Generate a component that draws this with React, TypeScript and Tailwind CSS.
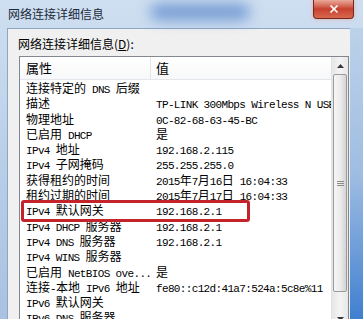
import { X } from "lucide-react";

type Row = { name: string; value: string };

const rows: Row[] = [
  { name: "连接特定的 DNS 后缀", value: "" },
  { name: "描述", value: "TP-LINK 300Mbps Wireless N USB Adapter" },
  { name: "物理地址", value: "0C-82-68-63-45-BC" },
  { name: "已启用 DHCP", value: "是" },
  { name: "IPv4 地址", value: "192.168.2.115" },
  { name: "IPv4 子网掩码", value: "255.255.255.0" },
  { name: "获得租约的时间", value: "2015年7月16日 16:04:33" },
  { name: "租约过期的时间", value: "2015年7月17日 16:04:33" },
  { name: "IPv4 默认网关", value: "192.168.2.1" },
  { name: "IPv4 DHCP 服务器", value: "192.168.2.1" },
  { name: "IPv4 DNS 服务器", value: "192.168.2.1" },
  { name: "IPv4 WINS 服务器", value: "" },
  { name: "已启用 NetBIOS ove...", value: "是" },
  { name: "连接-本地 IPv6 地址", value: "fe80::c12d:41a7:524a:5c8e%11" },
  { name: "IPv6 默认网关", value: "" },
  { name: "IPv6 DNS 服务器", value: "" },
];

// SimSun-like: half width latin, full width CJK
function Mixed({ text }: { text: string }) {
  const parts = text.match(/[\x00-\x7f]+|[^\x00-\x7f]+/g) ?? [];
  return (
    <>
      {parts.map((p, i) =>
        /^[\x00-\x7f]/.test(p) ? (
          <span
            key={i}
            className="inline-block leading-[15px] font-['Liberation_Mono',monospace] text-[11px] tracking-[-0.65px]"
          >
            {p}
          </span>
        ) : (
          <span
            key={i}
            className="inline-block leading-[15px] font-['Noto_Sans_CJK_SC',sans-serif] text-[12px]"
          >
            {p}
          </span>
        )
      )}
    </>
  );
}

function ScrollBar() {
  return (
    <div className="w-[17px] flex flex-col bg-gradient-to-r from-[#e6e6e6] via-[#f4f4f4] to-[#e6e6e6] border-l border-[#e3e3e3]">
      <div className="h-[17px] flex items-center justify-center">
        <svg width="7" height="4" viewBox="0 0 7 4">
          <path d="M0 4 L3.5 0 L7 4 Z" fill="#3a3a3a" />
        </svg>
      </div>
      <div className="flex-1 flex flex-col pb-[18px]">
        <div className="flex-1 mx-[1px] rounded-[2px] border border-[#9b9b9b] bg-gradient-to-r from-[#f6f6f6] via-[#ececec] to-[#d4d4d4] flex items-center justify-center">
          <div className="flex flex-col gap-[1px]">
            <span className="block w-[7px] h-[1px] bg-[#8c8c8c]" />
            <span className="block w-[7px] h-[1px] bg-[#8c8c8c]" />
            <span className="block w-[7px] h-[1px] bg-[#8c8c8c]" />
          </div>
        </div>
      </div>
      <div className="h-[17px] flex items-center justify-center">
        <svg width="7" height="4" viewBox="0 0 7 4">
          <path d="M0 0 L3.5 4 L7 0 Z" fill="#3a3a3a" />
        </svg>
      </div>
    </div>
  );
}

export default function App() {
  return (
    <div className="relative w-[363px] h-[319px] overflow-hidden flex flex-col bg-gradient-to-b from-[#cfdff1] via-[#b9cfe8] to-[#a9c2e0] text-black">
      {/* title bar */}
      <div className="relative h-[28px] flex items-start shrink-0">
        <div className="absolute left-[150px] top-[4px] w-[100px] h-[16px] rounded-full bg-[#5d8acb] blur-[7px] opacity-80" />
        <span className="relative pl-[8px] pt-[6px] text-[12px] leading-[16px] text-[#1c2a3a] font-['Noto_Sans_CJK_SC',sans-serif]">
          网络连接详细信息
        </span>
        <div className="relative ml-auto mr-[9px] w-[41px] h-[19px] rounded-b-[4px] border border-t-0 border-[#6e2a22] bg-gradient-to-b from-[#e9a99a] via-[#c7402f] to-[#d8684d] flex items-center justify-center shadow-[0_0_4px_rgba(255,140,120,0.6)]">
          <X size={12} color="#ffffff" strokeWidth={3.5} />
        </div>
      </div>

      {/* body */}
      <div className="flex-1 flex min-h-0">
        <div className="w-[7px] shrink-0" />
        <div className="flex-1 min-w-0 bg-[#f0f0f0] border-l border-t border-[#8ea6c4] pt-[7px]">
          <div className="pl-[10px] h-[15px] text-[12px] leading-[15px] font-['Noto_Sans_CJK_SC',sans-serif]">
            网络连接详细信息(<span className="underline">D</span>):
          </div>
          <div className="mt-[5px] ml-[11px] mr-[1px] h-[272px] bg-white border border-[#828790] flex">
            <div className="flex-1 min-w-0 overflow-hidden">
              <div className="h-[23px] grid grid-cols-[131px_1fr] border-b border-[#e3e6ea] bg-gradient-to-b from-white to-[#f7f8f9]">
                <div className="pl-[6px] flex items-center text-[13px] font-['Noto_Sans_CJK_SC',sans-serif] border-r border-[#e5e5e5]">
                  属性
                </div>
                <div className="pl-[5px] flex items-center text-[13px] font-['Noto_Sans_CJK_SC',sans-serif]">
                  值
                </div>
              </div>
              {rows.map((r) => (
                <div key={r.name} className="h-[15.3px] grid grid-cols-[131px_1fr]">
                  <div className="pl-[6px] leading-[15.3px] whitespace-pre overflow-hidden">
                    <Mixed text={r.name} />
                  </div>
                  <div className="pl-[5px] leading-[15.3px] whitespace-pre overflow-hidden">
                    <Mixed text={r.value} />
                  </div>
                </div>
              ))}
            </div>
            <ScrollBar />
          </div>
        </div>
        <div className="w-[13px] shrink-0 bg-gradient-to-b from-[#bcd2ea] via-[#9fbde2] to-[#3f7fcf]" />
      </div>

      {/* annotation */}
      <div className="absolute left-[21px] top-[200px] w-[229px] h-[22px] border-[3px] border-[#c4232b] rounded-[3px]" />
    </div>
  );
}
